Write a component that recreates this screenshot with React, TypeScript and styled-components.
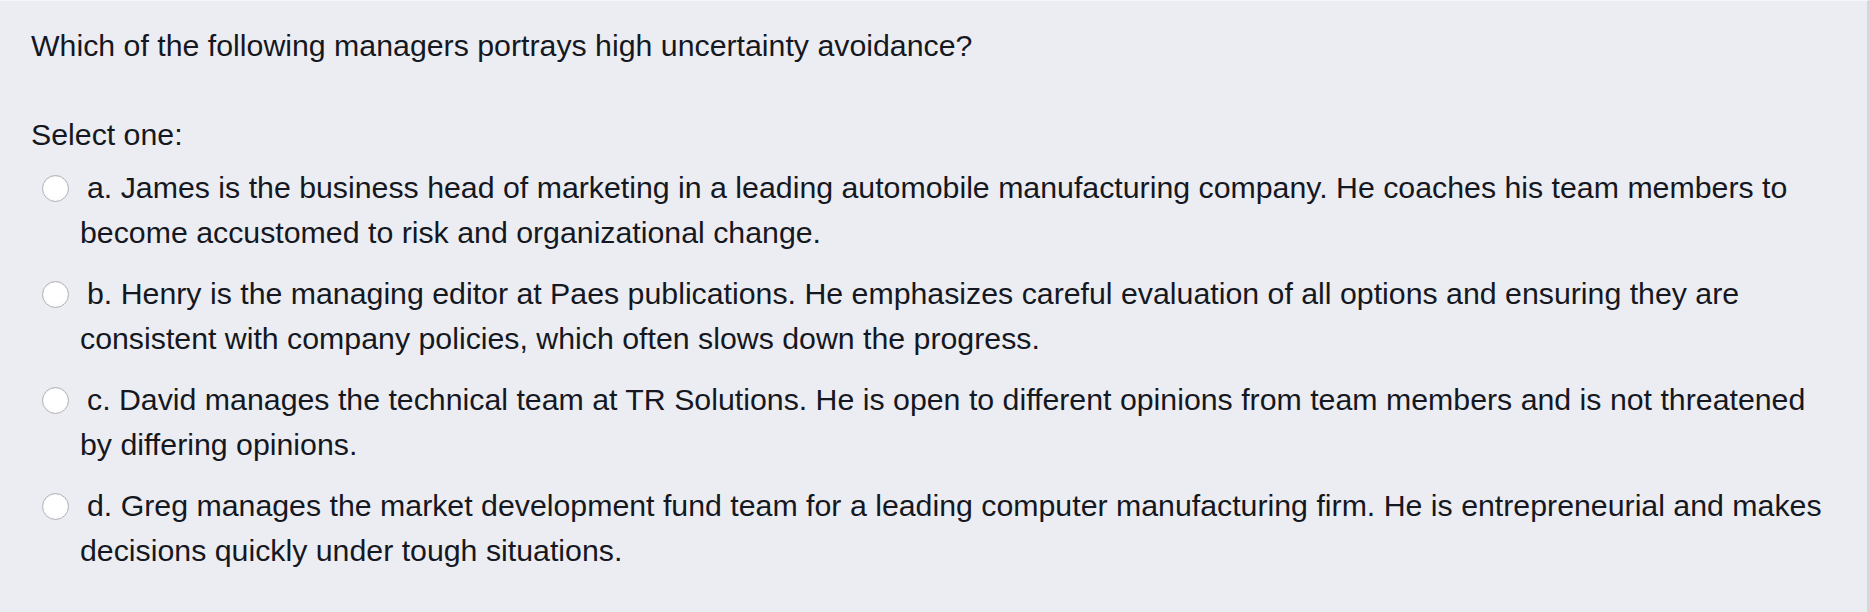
import React from "react";
import styled, { createGlobalStyle } from "styled-components";

const GlobalStyle = createGlobalStyle`
  html, body {
    margin: 0;
    padding: 0;
    background: #ecedf3;
  }
  body {
    font-family: "Liberation Sans", Arial, Helvetica, sans-serif;
  }
`;

const Panel = styled.div`
  box-sizing: border-box;
  width: 1870px;
  height: 612px;
  background: #ecedf3;
  border-top: 1px solid #f4f5f8;
  border-right: 3px solid #d6d7dd;
  padding: 23px 33px 0 31px;
  font-family: "Liberation Sans", Arial, Helvetica, sans-serif;
  font-size: 30.3px;
  line-height: 44.5px;
  color: #151821;
`;

const Question = styled.p`
  margin: 0 0 44px 0;
`;

const Prompt = styled.div`
  margin: 0 0 9px 0;
`;

const Options = styled.div`
  display: flex;
  flex-direction: column;
  gap: 17px;
`;

const Option = styled.label`
  display: block;
  padding-left: 49px;
  text-indent: -38px;
  cursor: pointer;
`;

const Radio = styled.span`
  display: inline-block;
  box-sizing: border-box;
  width: 27px;
  height: 27px;
  margin-right: 18px;
  border-radius: 50%;
  border: 1.5px solid #b2b3b8;
  background: radial-gradient(circle at 50% 40%, #ffffff 55%, #f3f3f5 100%);
  box-shadow: inset 0 1px 1px rgba(0, 0, 0, 0.06);
  vertical-align: middle;
  position: relative;
  top: -2px;
  text-indent: 0;
`;

const options = [
  "a. James is the business head of marketing in a leading automobile manufacturing company. He coaches his team members to become accustomed to risk and organizational change.",
  "b. Henry is the managing editor at Paes publications. He emphasizes careful evaluation of all options and ensuring they are consistent with company policies, which often slows down the progress.",
  "c. David manages the technical team at TR Solutions. He is open to different opinions from team members and is not threatened by differing opinions.",
  "d. Greg manages the market development fund team for a leading computer manufacturing firm. He is entrepreneurial and makes decisions quickly under tough situations.",
];

export default function App() {
  return (
    <>
      <GlobalStyle />
      <Panel>
        <Question>Which of the following managers portrays high uncertainty avoidance?</Question>
        <Prompt>Select one:</Prompt>
        <Options>
          {options.map((text) => (
            <Option key={text}>
              <Radio />
              {text}
            </Option>
          ))}
        </Options>
      </Panel>
    </>
  );
}
